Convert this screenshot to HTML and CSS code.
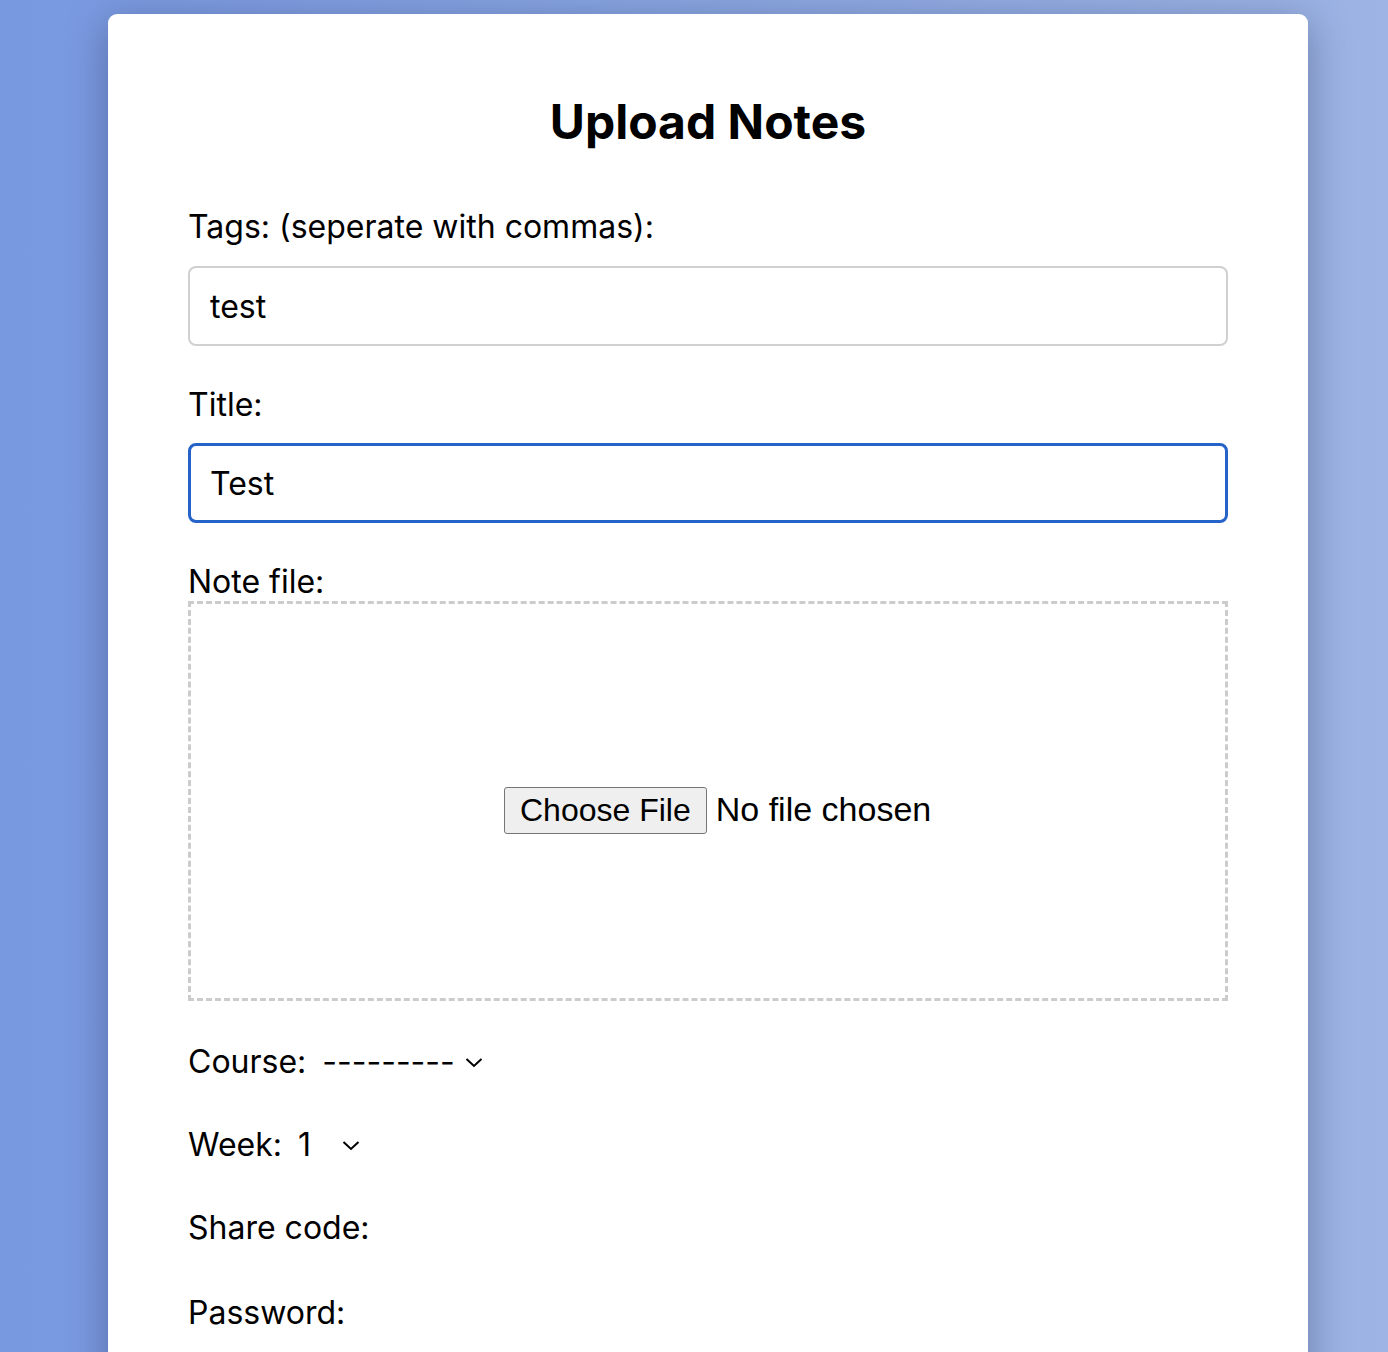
FILE: index.html
```html
<!DOCTYPE html>
<html lang="en">
<head>
<meta charset="utf-8">
<title>Upload Notes</title>
<link rel="stylesheet" href="styles.css">
</head>
<body>
<main class="card">
  <h1 class="title">Upload Notes</h1>
  <form class="form">
    <label class="label" for="tags">Tags: (seperate with commas):</label>
    <input class="text-input" id="tags" type="text" value="test">

    <label class="label" for="title">Title:</label>
    <input class="text-input is-focused" id="title" type="text" value="Test">

    <label class="label label-tight" for="file">Note file:</label>
    <div class="dropzone">
      <input class="file-input" id="file" type="file">
    </div>

    <div class="row row-first">
      <label class="inline-label" for="course">Course:</label>
      <span class="select-wrap">
        <select class="select" id="course">
          <option>---------</option>
        </select>
        <svg class="chev" width="18" height="11" viewBox="0 0 18 11"><path d="M1.5 2 L9 9 L16.5 2" fill="none" stroke="#000" stroke-width="2"/></svg>
      </span>
    </div>

    <div class="row">
      <label class="inline-label" for="week">Week:</label>
      <span class="select-wrap">
        <select class="select" id="week">
          <option>1</option><option>2</option><option>3</option><option>4</option><option>5</option><option>6</option><option>7</option><option>8</option><option>9</option><option>10</option><option>11</option><option>12</option>
        </select>
        <svg class="chev" width="18" height="11" viewBox="0 0 18 11"><path d="M1.5 2 L9 9 L16.5 2" fill="none" stroke="#000" stroke-width="2"/></svg>
      </span>
    </div>

    <div class="row">
      <label class="inline-label" for="share">Share code:</label>
    </div>

    <div class="row">
      <label class="inline-label" for="pw">Password:</label>
    </div>
  </form>
</main>
</body>
</html>
```

FILE: styles.css
```css
html, body {
  margin: 0;
  padding: 0;
}
body {
  min-height: 1352px;
  background: linear-gradient(to right, #7898e0 0%, #8aa6e1 50%, #9db4e4 100%);
  font-family: Inter, "Noto Sans", sans-serif;
  color: #000;
  overflow: hidden;
}
.card {
  box-sizing: border-box;
  width: 1200px;
  margin: 14px 0 0 108px;
  min-height: 1400px;
  background: #fff;
  border-radius: 9px;
  box-shadow: 0 8px 40px rgba(20, 30, 60, 0.35);
  padding: 79px 80px 40px;
}
.title {
  margin: 0;
  text-align: center;
  font-size: 48px;
  line-height: 58px;
  font-weight: 700;
}
.form {
  display: flex;
  flex-direction: column;
  margin-top: 57px;
}
.label {
  font-size: 32px;
  line-height: 38px;
  margin-bottom: 20px;
}
.label-tight {
  margin-bottom: 0;
}
.text-input {
  box-sizing: border-box;
  width: 100%;
  height: 80px;
  border: 2px solid #d0d0d0;
  border-radius: 8px;
  padding: 0 20px;
  font-family: Inter, "Noto Sans", sans-serif;
  font-size: 32px;
  color: #000;
  margin: 0 0 40px;
  outline: none;
}
.text-input.is-focused {
  border: 3px solid #2663c9;
  padding: 0 19px;
  margin-top: -1px;
  margin-bottom: 40px;
}
.dropzone {
  box-sizing: border-box;
  height: 400px;
  border: 3px dashed #cccccc;
  display: flex;
  align-items: center;
  justify-content: flex-start;
  padding-top: 18px;
  padding-left: 313px;
}
.file-input {
  font-family: "Liberation Sans", Arial, sans-serif;
  font-size: 34px;
  color: #000;
}
.file-input::file-selector-button {
  font-family: "Liberation Sans", Arial, sans-serif;
  font-size: 32px;
  background: #efefef;
  border: 1px solid #767676;
  border-radius: 3px;
  padding: 4px 15px;
  margin-right: 9px;
  color: #000;
}
.row {
  display: flex;
  align-items: center;
  margin-top: 45px;
  font-size: 32px;
  line-height: 38px;
}
.row-first {
  margin-top: 42px;
}
.row:last-child {
  margin-top: 47px;
}
.inline-label {
  margin-right: 16px;
}
.select-wrap {
  display: inline-flex;
  align-items: center;
}
.select {
  appearance: none;
  -webkit-appearance: none;
  border: none;
  background: transparent;
  padding: 0;
  margin: 0;
  font-family: Inter, "Noto Sans", sans-serif;
  font-size: 32px;
  line-height: 38px;
  color: #000;
  outline: none;
}
.chev {
  margin-left: 10px;
  margin-top: 0;
}
```
